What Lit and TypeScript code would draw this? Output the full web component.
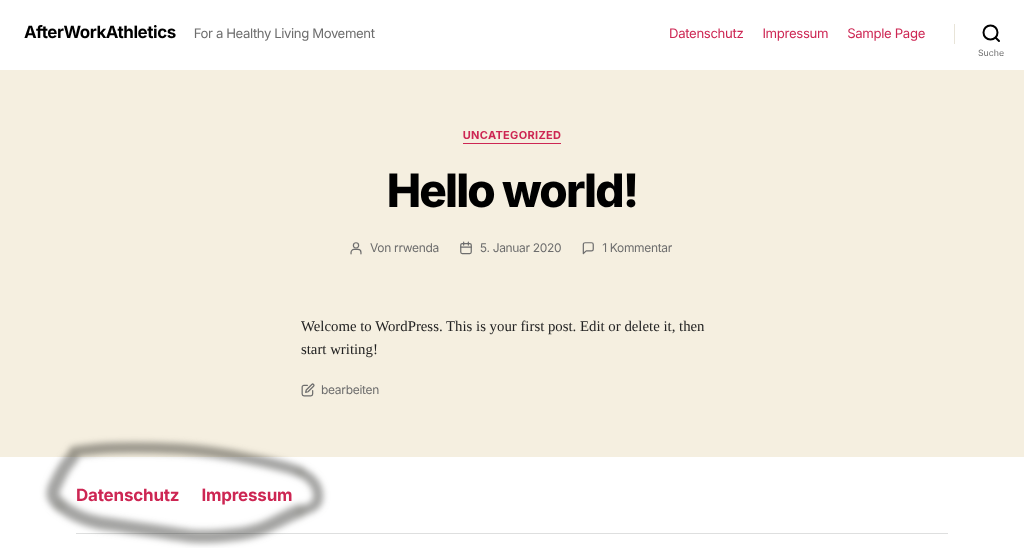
import { LitElement, html, css, svg } from "lit";
import { customElement } from "lit/decorators.js";

const icon = (w: number, content: unknown) =>
  html`<svg class="ic" width=${w} height=${w} viewBox="0 0 24 24" fill="none" stroke="currentColor" stroke-width="2.1" stroke-linecap="round" stroke-linejoin="round">${content}</svg>`;

@customElement("app-root")
export class AppRoot extends LitElement {
  static styles = css`
    :host { display: block; width: 1024px; height: 548px; overflow: hidden; position: relative; background: #fff; font-family: Inter, "Liberation Sans", sans-serif; text-rendering: geometricPrecision; }
    a { color: #cd2653; text-decoration: none; }
    header { height: 70px; display: flex; align-items: center; padding: 0 0 3px 24px; box-sizing: border-box; }
    .brand { font-size: 17px; font-weight: 650; color: #000; letter-spacing: -0.47px; margin-right: 18px; margin-top: -1px; }
    .tag { font-size: 13.2px; color: #6d6d6d; flex: 1; letter-spacing: -0.42px; }
    nav { display: flex; gap: 19px; font-size: 13.2px; letter-spacing: -0.35px; }
    .sep { width: 1px; height: 20px; background: #e8e4d8; margin: 0 3px 0 29px; }
    .search { width: 66px; display: flex; flex-direction: column; align-items: center; gap: 5px; margin-top: 15px; color: #000; font-size: 8.8px; }
    .search span { color: #6d6d6d; }
    .hero { height: 387px; background: #f5efe0; display: flex; flex-direction: column; align-items: center; box-sizing: border-box; padding-top: 58px; }
    .cat { font-size: 11px; font-weight: 700; letter-spacing: 0.32px; line-height: 14px; border-bottom: 1px solid #cd2653; padding-bottom: 1px; }
    h1 { margin: 19px 0 0; font-size: 46px; line-height: 56px; font-weight: 800; letter-spacing: -1.88px; color: #000; }
    .meta { display: flex; gap: 20px; margin-top: 21px; padding-right: 3px; font-size: 12px; color: #6d6d6d; letter-spacing: -0.33px; line-height: 16px; }
    .meta div { display: flex; align-items: center; gap: 7px; }
    .ic { flex: none; }
    .body { width: 422px; margin: 60px 0 0 0; box-sizing: border-box; }
    .body p { margin: 0; font-family: "Liberation Serif", serif; font-size: 14.8px; line-height: 23px; color: #222; }
    .edit { display: flex; align-items: center; gap: 6px; margin-top: 20px; font-size: 12px; color: #6d6d6d; line-height: 16px; letter-spacing: -0.3px; }
    .foot { padding: 29px 76px 0; }
    .foot-links { display: flex; gap: 22px; font-size: 17px; font-weight: 650; line-height: 20px; letter-spacing: -0.2px; }
    .rule { height: 1px; background: #dedfdf; margin-top: 27px; }
    .scribble { position: absolute; left: 0; top: 0; pointer-events: none; mix-blend-mode: multiply; }
  `;

  render() {
    return html`
      <header>
        <div class="brand">AfterWorkAthletics</div>
        <div class="tag">For a Healthy Living Movement</div>
        <nav><a>Datenschutz</a><a>Impressum</a><a>Sample Page</a></nav>
        <div class="sep"></div>
        <div class="search">
          <svg width="20" height="20" viewBox="0 0 20 20" fill="none" stroke="#000" stroke-width="2" stroke-linecap="round"><circle cx="9.5" cy="9.5" r="7"/><path d="M14.7 14.7l3.3 3.3"/></svg>
          <span>Suche</span>
        </div>
      </header>
      <section class="hero">
        <a class="cat">UNCATEGORIZED</a>
        <h1>Hello world!</h1>
        <div class="meta">
          <div>${icon(14, svg`<circle cx="12" cy="7.5" r="4.5"/><path d="M3.5 22v-2.5a5 5 0 0 1 5-5h7a5 5 0 0 1 5 5V22"/>`)}Von rrwenda</div>
          <div>${icon(14, svg`<rect x="3" y="4.5" width="18" height="17" rx="2.5"/><path d="M16 2v5M8 2v5M3 10.5h18"/>`)}5. Januar 2020</div>
          <div>${icon(14, svg`<path d="M21 14a3 3 0 0 1-3 3H9l-5 4.5V6a3 3 0 0 1 3-3h11a3 3 0 0 1 3 3z"/>`)}1 Kommentar</div>
        </div>
        <div class="body">
          <p>Welcome to WordPress. This is your first post. Edit or delete it, then start writing!</p>
          <div class="edit">${icon(14, svg`<path d="M11 4H5a3 3 0 0 0-3 3v12a3 3 0 0 0 3 3h12a3 3 0 0 0 3-3v-6"/><path d="M18.5 2.5a2.1 2.1 0 0 1 3 3L12 15l-4 1 1-4z"/>`)}bearbeiten</div>
        </div>
      </section>
      <section class="foot">
        <div class="foot-links"><a>Datenschutz</a><a>Impressum</a></div>
        <div class="rule"></div>
      </section>
      <svg class="scribble" width="1024" height="548" viewBox="0 0 1024 548" fill="none">
        <defs><filter id="b" x="-10%" y="-20%" width="120%" height="140%"><feGaussianBlur stdDeviation="3"/></filter></defs>
        <g filter="url(#b)" stroke="#9a9a98" stroke-opacity="0.9" stroke-linecap="round" stroke-linejoin="round">
          <path stroke-width="11" d="M74 452C100 447 140 447 180 449C210 451 232 455 250 459C270 463 288 467 300 472"/>
          <path stroke-width="10" d="M300 472C312 478 319 487 318 498C318 505 310 509 300 511"/>
          <path stroke-width="13" d="M300 511C288 515 280 521 270 525C256 532 244 534 230 535C210 537 200 537 190 536C160 532 130 527 100 523C84 520 70 513 60 505"/>
          <path stroke-width="13" d="M60 505C52 498 52 494 54 488C58 480 62 468 72 458"/>
        </g>
      </svg>
    `;
  }
}
